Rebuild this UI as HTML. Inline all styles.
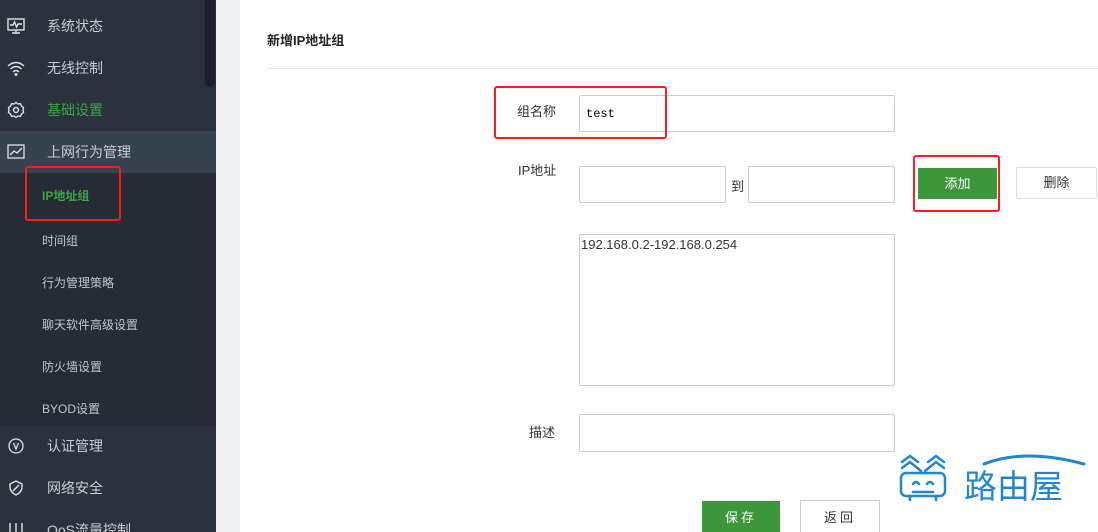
<!DOCTYPE html>
<html style="height:532px;overflow:hidden"><head><meta charset="utf-8"><style>
*{margin:0;padding:0;box-sizing:border-box}
body{width:1098px;height:532px;overflow:hidden;background:#eef0f3;font-family:"Liberation Sans","Noto Sans CJK SC",sans-serif;position:relative}
.side{position:absolute;left:0;top:0;width:216px;height:532px;background:#2b313d;overflow:hidden}
.sb{position:absolute;left:205px;top:0;width:10px;height:87px;background:#1c2028;border-radius:0 0 5px 5px}
.item{position:absolute;left:0;width:216px;height:42px;color:#c8ccd3;font-size:14px;line-height:42px;padding-left:47px}
.ic{position:absolute;left:7px;top:12px;width:18px;height:18px}
.sub{position:absolute;left:0;top:173px;width:216px;height:252px;background:#262b36}
.si{position:absolute;left:42px;color:#c0c4cc;font-size:12px}
.main{position:absolute;left:240px;top:0;width:858px;height:532px;background:#fff}
.t{position:absolute;font-size:13px;color:#333}
.inp{position:absolute;border:1px solid #ccc;border-radius:2px;background:#fff}
.red{position:absolute;border:2px solid #f0201c;border-radius:3px}
.btn{position:absolute;font-size:13px;text-align:center}
</style></head><body>
<div class="side">
<div class="sb"></div>
<div class="item" style="top:5px"><svg class="ic" viewBox="0 0 18 18" fill="none" stroke="#dfe2e6" stroke-width="1.4"><rect x="1" y="2" width="16" height="11"/><path d="M3 8h3l1.5-3 2 5 1.5-3h4M9 13v3M5 16h8"/></svg>系统状态</div>
<div class="item" style="top:47px"><svg class="ic" viewBox="0 0 18 18" fill="none" stroke="#dfe2e6" stroke-width="1.4"><path d="M1 7q8-7 16 0M3.5 10q5.5-5 11 0M6 13q3-3 6 0"/><circle cx="9" cy="15.5" r="0.8" fill="#dfe2e6"/></svg>无线控制</div>
<div class="item" style="top:89px;color:#3fa34a"><svg class="ic" viewBox="0 0 18 18" fill="none" stroke="#dfe2e6" stroke-width="1.4"><path d="M9 1.5l2 1.5 2.5-.3 1 2.3 2 1.5-.5 2.5.5 2.5-2 1.5-1 2.3-2.5-.3-2 1.5-2-1.5-2.5.3-1-2.3-2-1.5.5-2.5-.5-2.5 2-1.5 1-2.3 2.5.3z"/><circle cx="9" cy="9" r="2.5"/></svg>基础设置</div>
<div class="item" style="top:131px;background:#36434f"><svg class="ic" viewBox="0 0 18 18" fill="none" stroke="#dfe2e6" stroke-width="1.3"><rect x="1" y="2" width="16" height="13"/><path d="M3 12l4-4 3 2 5-5"/></svg>上网行为管理</div>
<div class="sub">
<div class="si" style="top:14px;color:#3fa34a;font-weight:bold">IP地址组</div>
<div class="si" style="top:59px">时间组</div>
<div class="si" style="top:101px">行为管理策略</div>
<div class="si" style="top:143px">聊天软件高级设置</div>
<div class="si" style="top:185px">防火墙设置</div>
<div class="si" style="top:227px">BYOD设置</div>
</div>
<div class="red" style="left:25px;top:166px;width:96px;height:55px"></div>
<div class="item" style="top:425px"><svg class="ic" viewBox="0 0 18 18" fill="none" stroke="#dfe2e6" stroke-width="1.3"><circle cx="9" cy="9" r="7"/><path d="M6.5 6l2.5 6 2.5-6"/></svg>认证管理</div>
<div class="item" style="top:467px"><svg class="ic" viewBox="0 0 18 18" fill="none" stroke="#dfe2e6" stroke-width="1.4"><path d="M9 2l6 3v3q0 5-6 8-6-3-6-8V5z"/><path d="M6 12l6-6"/></svg>网络安全</div>
<div class="item" style="top:509px"><svg class="ic" viewBox="0 0 18 18" fill="none" stroke="#dfe2e6" stroke-width="1.4"><path d="M3 2v14M9 2v14M15 2v14"/></svg>QoS流量控制</div>
</div>
<div class="main">
<div class="t" style="left:27px;top:30px;font-weight:bold;color:#222">新增IP地址组</div>
<div style="position:absolute;left:27px;top:68px;width:831px;height:1px;background:#e6e6e6"></div>
<div class="t" style="left:277px;top:101px">组名称</div>
<div class="inp" style="left:339px;top:95px;width:316px;height:37px"><span style="position:absolute;left:6px;top:11px;font-family:'Liberation Mono',monospace;font-size:12px;color:#000">test</span></div>
<div class="t" style="left:278px;top:160px">IP地址</div>
<div class="inp" style="left:339px;top:166px;width:147px;height:37px"></div>
<div class="t" style="left:491px;top:176px">到</div>
<div class="inp" style="left:508px;top:166px;width:147px;height:37px"></div>
<div class="btn" style="left:678px;top:168px;width:79px;height:31px;background:#3c963a;color:#fff;line-height:31px">添加</div>
<div class="btn" style="left:776px;top:167px;width:81px;height:32px;border:1px solid #ddd;color:#333;line-height:30px;border-radius:2px">删除</div>
<div class="inp" style="left:339px;top:234px;width:316px;height:152px"><span style="position:absolute;left:1px;top:2px;font-size:13px;color:#333">192.168.0.2-192.168.0.254</span></div>
<div class="t" style="left:289px;top:422px">描述</div>
<div class="inp" style="left:339px;top:414px;width:316px;height:38px"></div>
<div class="btn" style="left:462px;top:501px;width:78px;height:34px;background:#3c963a;color:#fff;line-height:34px;letter-spacing:3px">保存</div>
<div class="btn" style="left:560px;top:500px;width:80px;height:36px;border:1px solid #ccc;color:#333;line-height:34px;letter-spacing:3px">返回</div>
</div>
<div class="red" style="left:494px;top:86px;width:173px;height:53px"></div>
<div class="red" style="left:913px;top:155px;width:87px;height:57px"></div>
<svg style="position:absolute;left:896px;top:450px" width="190" height="56" viewBox="0 0 190 56" fill="none" stroke="#2186cc" stroke-width="2.5" stroke-linecap="round">
<path d="M6 12l8-6 8 6M6 18l8-6 11 9M48 12l-8-6-8 6M48 18l-8-6-11 9"/>
<rect x="5" y="23" width="44" height="23" rx="5"/>
<path d="M14 46v4M40 46v4M17 34q3-4 6 0M31 34q3-4 6 0M17 42h20"/>
<path d="M88 14q40-16 100 0" stroke-width="3"/>
<text x="68" y="48" font-family="'Noto Sans CJK SC',sans-serif" font-size="33" fill="#2186cc" stroke="none">路由屋</text>
</svg>
</body></html>
